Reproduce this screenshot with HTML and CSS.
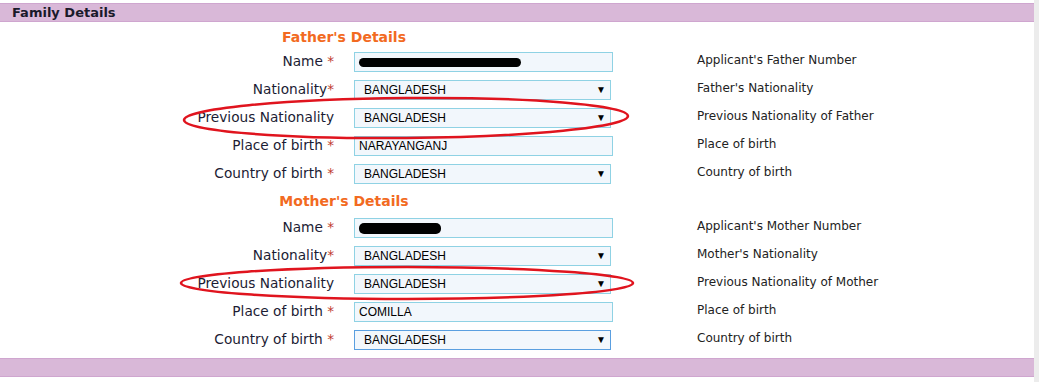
FILE: index.html
```html
<!DOCTYPE html>
<html lang="en">
<head>
  <meta charset="UTF-8">
  <title>Family Details</title>
  <link rel="stylesheet" href="styles.css">
</head>
<body>
  <div class="page">
    <div class="bar">Family Details</div>

    <div class="form">
      <h3 class="sub">Father's Details</h3>
      <div class="grid">
        <div class="lbl">Name <span class="req">*</span></div>
        <div class="fld text"><span class="scribble w1"></span></div>
        <div class="hint">Applicant's Father Number</div>

        <div class="lbl">Nationality<span class="req">*</span></div>
        <div class="fld sel">BANGLADESH<span class="arr">&#9660;</span></div>
        <div class="hint">Father's Nationality</div>

        <div class="lbl">Previous Nationality</div>
        <div class="fld sel">BANGLADESH<span class="arr">&#9660;</span></div>
        <div class="hint">Previous Nationality of Father</div>

        <div class="lbl">Place of birth <span class="req">*</span></div>
        <div class="fld text">NARAYANGANJ</div>
        <div class="hint">Place of birth</div>

        <div class="lbl">Country of birth <span class="req">*</span></div>
        <div class="fld sel">BANGLADESH<span class="arr">&#9660;</span></div>
        <div class="hint">Country of birth</div>
      </div>

      <h3 class="sub">Mother's Details</h3>
      <div class="grid mother">
        <div class="lbl">Name <span class="req">*</span></div>
        <div class="fld text"><span class="scribble w2"></span></div>
        <div class="hint">Applicant's Mother Number</div>

        <div class="lbl">Nationality<span class="req">*</span></div>
        <div class="fld sel">BANGLADESH<span class="arr">&#9660;</span></div>
        <div class="hint">Mother's Nationality</div>

        <div class="lbl">Previous Nationality</div>
        <div class="fld sel">BANGLADESH<span class="arr">&#9660;</span></div>
        <div class="hint">Previous Nationality of Mother</div>

        <div class="lbl">Place of birth <span class="req">*</span></div>
        <div class="fld text">COMILLA</div>
        <div class="hint">Place of birth</div>

        <div class="lbl">Country of birth <span class="req">*</span></div>
        <div class="fld sel focus">BANGLADESH<span class="arr">&#9660;</span></div>
        <div class="hint">Country of birth</div>
      </div>
    </div>

    <div class="bar foot"></div>

    <!-- red marker circles drawn over the screenshot -->
    <svg class="marks" width="1044" height="382" viewBox="0 0 1044 382">
      <ellipse cx="406" cy="118" rx="222" ry="20" fill="none" stroke="#e0141e" stroke-width="2.5" transform="rotate(-0.5 406 118)"/>
      <ellipse cx="407" cy="283" rx="226" ry="16" fill="none" stroke="#e0141e" stroke-width="2.5"/>
    </svg>
  </div>
</body>
</html>
```

FILE: styles.css
```css
body {
  margin: 0;
  background: #fff;
  font-family: "DejaVu Sans", Verdana, sans-serif;
  color: #1c1c34;
}

.page {
  position: relative;
  width: 1039px;
  height: 382px;
  padding-top: 3px;
  box-sizing: border-box;
  border-right: 5px solid #ececec;
}

.bar {
  height: 17px;
  background: #d9b8d8;
  border-top: 1px solid #cfa6cf;
  border-bottom: 1px solid #cfa6cf;
  font-weight: bold;
  font-size: 13px;
  line-height: 17px;
  padding-left: 12px;
  color: #1a1a2a;
}

.bar.foot {
  margin-top: 7px;
}

.form {
  padding-top: 6px;
}

.sub {
  width: 688px;
  margin: 0;
  text-align: center;
  font-size: 14px;
  line-height: 18px;
  color: #f26a21;
}

.grid {
  display: grid;
  grid-template-columns: 334px 259px 1fr;
  column-gap: 20px;
  row-gap: 8px;
  align-items: center;
  margin-top: 6px;
  margin-bottom: 8px;
}

.grid.mother {
  margin-top: 8px;
}

.lbl {
  text-align: right;
  font-size: 13.7px;
  line-height: 20px;
  margin-top: -3px;
}

.req {
  color: #c0392b;
}

.hint {
  margin-left: 64px;
  font-size: 12px;
  line-height: 20px;
  margin-top: -4px;
  color: #222;
}

.fld {
  position: relative;
  height: 20px;
  box-sizing: border-box;
  border: 1px solid #8fd2e4;
  background: #f2f7fc;
  font-family: "Liberation Sans", Arial, sans-serif;
  font-size: 12px;
  line-height: 18px;
  color: #000;
}

.fld.text {
  padding-left: 4px;
}

.fld.sel {
  width: 257px;
  padding-left: 9px;
}

.fld.focus {
  border-color: #5a9fe0;
}

.arr {
  position: absolute;
  right: 4px;
  top: 0;
  font-size: 10px;
}

.scribble {
  display: inline-block;
  height: 9px;
  background: #000;
  border-radius: 5px;
  vertical-align: middle;
}

.scribble.w1 { width: 162px; }
.scribble.w2 { width: 82px; height: 11px; }

.marks {
  position: absolute;
  left: 0;
  top: 0;
  pointer-events: none;
}
```
